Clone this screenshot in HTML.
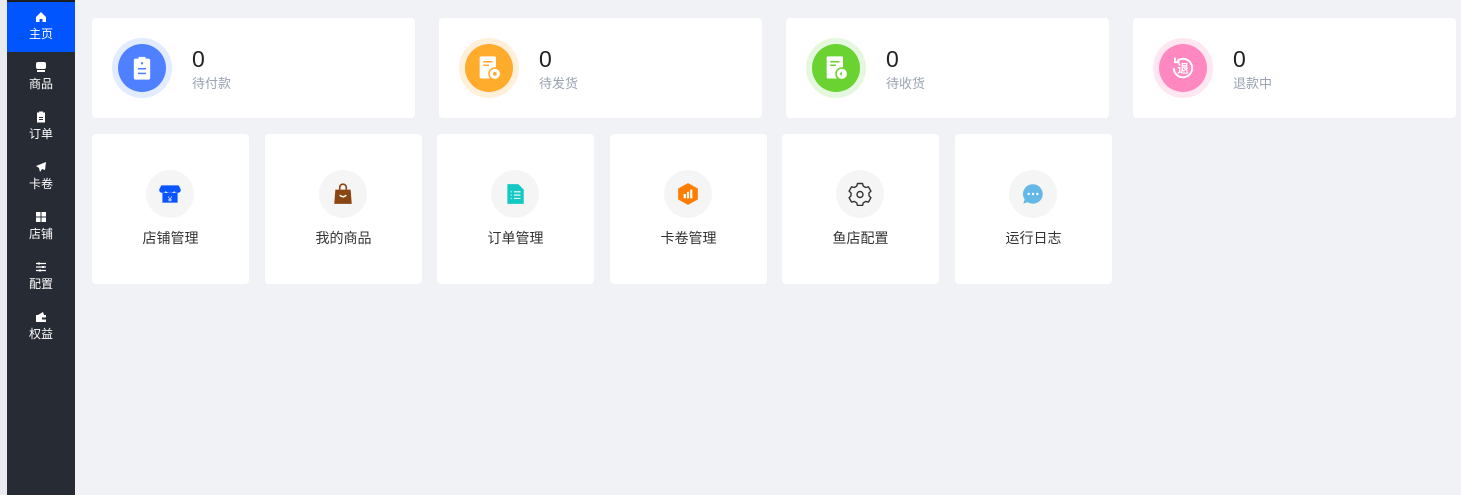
<!DOCTYPE html>
<html><head><meta charset="utf-8"><style>
*{margin:0;padding:0;box-sizing:border-box}
body{width:1461px;height:495px;background:#f0f2f5;font-family:"Liberation Sans","Noto Sans CJK SC",sans-serif;position:relative;overflow:hidden}
.strip{position:absolute;left:0;top:0;width:7px;height:495px;background:#e9ebee}
.side{position:absolute;left:7px;top:0;width:68px;height:495px;background:#272b34;border-top:2px solid #1b1e24}
.it{height:50px;color:#fff;text-align:center;font-size:12px;padding-top:9px}
.it.a{background:#0055ff}
.it svg{display:block;margin:0 auto 2px;width:12px;height:12px}
.card{position:absolute;top:18px;width:323px;height:100px;background:#fff;border-radius:4px}
.ring{position:absolute;left:20px;top:20px;width:60px;height:60px;border-radius:50%}
.in{position:absolute;left:6px;top:6px;width:48px;height:48px;border-radius:50%;display:flex;align-items:center;justify-content:center}
.num{position:absolute;left:100px;top:28px;font-size:23px;color:#222}
.lab{position:absolute;left:100px;top:55px;font-size:13px;color:#9aa3b2}
.tile{position:absolute;top:134px;width:157px;height:150px;background:#fff;border-radius:4px}
.ic{position:absolute;left:54px;top:36px;width:48px;height:48px;border-radius:50%;background:#f5f5f5;display:flex;align-items:center;justify-content:center}
.tl{position:absolute;left:0;right:0;top:94px;text-align:center;font-size:14px;color:#333}
</style></head><body>
<div class="strip"></div>
<div class="side">
<div class="it a"><svg viewBox="0 0 12 12"><path d="M6 1L1 6v5h3.5V8h3v3H11V6z" fill="#fff"/></svg>主页</div>
<div class="it"><svg viewBox="0 0 12 12"><rect x="1" y="1" width="10" height="7" rx="2" fill="#fff"/><rect x="2" y="9" width="8" height="2" fill="#fff"/></svg>商品</div>
<div class="it"><svg viewBox="0 0 12 12"><rect x="2" y="1.5" width="8" height="10" fill="#fff"/><rect x="4" y="0.5" width="4" height="2" fill="#fff"/><rect x="4" y="6" width="4" height="1" fill="#272b34"/><rect x="4" y="8" width="4" height="1" fill="#272b34"/></svg>订单</div>
<div class="it"><svg viewBox="0 0 12 12"><path d="M11 1L1 5l3 2 1 4 2-3 3 1z" fill="#fff"/></svg>卡卷</div>
<div class="it"><svg viewBox="0 0 12 12"><rect x="1" y="1" width="4.5" height="4.5" fill="#fff"/><rect x="6.5" y="1" width="4.5" height="4.5" fill="#fff"/><rect x="1" y="6.5" width="4.5" height="4.5" fill="#fff"/><rect x="6.5" y="6.5" width="4.5" height="4.5" fill="#fff"/></svg>店铺</div>
<div class="it"><svg viewBox="0 0 12 12"><path d="M1 2.5h10M1 6h10M1 9.5h10" stroke="#fff" stroke-width="1.2"/><rect x="3" y="1.5" width="2" height="2" fill="#fff"/><rect x="7" y="5" width="2" height="2" fill="#fff"/><rect x="4" y="8.5" width="2" height="2" fill="#fff"/></svg>配置</div>
<div class="it"><svg viewBox="0 0 12 12"><rect x="1" y="4" width="10" height="7" fill="#fff"/><path d="M3 4l5-3 1 3z" fill="#fff"/><rect x="7" y="6.5" width="4" height="2" fill="#272b34"/></svg>权益</div>
</div>

<div class="card" style="left:92px"><div class="ring" style="background:#e3ebff"><div class="in" style="background:#4f80ff"><svg width="28" height="28" viewBox="0 0 24 24"><rect x="5" y="4" width="14" height="18" rx="1.5" fill="#fff"/><rect x="9" y="2.5" width="6" height="3" fill="#fff"/><circle cx="12" cy="8" r="1" fill="#4f80ff"/><rect x="8.5" y="12" width="7" height="1.3" fill="#4f80ff"/><rect x="8.5" y="16" width="7" height="1.3" fill="#4f80ff"/></svg></div></div><div class="num">0</div><div class="lab">待付款</div></div>
<div class="card" style="left:439px"><div class="ring" style="background:#fff0dc"><div class="in" style="background:#ffab2c"><svg width="28" height="28" viewBox="0 0 24 24"><rect x="4" y="2" width="14" height="19" rx="1.5" fill="#fff"/><rect x="7" y="6" width="8" height="1.3" fill="#ffab2c"/><rect x="7" y="9" width="5" height="1.3" fill="#ffab2c"/><circle cx="17" cy="17" r="5" fill="#fff" stroke="#ffab2c" stroke-width="1.3"/><circle cx="17" cy="17" r="1.6" fill="#ffab2c"/></svg></div></div><div class="num">0</div><div class="lab">待发货</div></div>
<div class="card" style="left:786px"><div class="ring" style="background:#e6f7df"><div class="in" style="background:#6bd331"><svg width="28" height="28" viewBox="0 0 24 24"><rect x="4" y="2" width="14" height="19" rx="1" fill="#fff"/><rect x="7" y="6" width="8" height="1.3" fill="#6bd331"/><rect x="7" y="9" width="5" height="1.3" fill="#6bd331"/><circle cx="17" cy="17" r="5" fill="#fff" stroke="#6bd331" stroke-width="1.3"/><path d="M15 17l2-2v4z" fill="#6bd331"/></svg></div></div><div class="num">0</div><div class="lab">待收货</div></div>
<div class="card" style="left:1133px"><div class="ring" style="background:#ffe7f1"><div class="in" style="background:#ff88c0"><svg width="30" height="30" viewBox="0 0 26 26"><path d="M5 13a8 8 0 1 0 3-6.2" fill="none" stroke="#fff" stroke-width="1.6"/><path d="M6 4v4h4" fill="none" stroke="#fff" stroke-width="1.6"/><text x="13" y="17" font-size="10" fill="#fff" text-anchor="middle" font-family="Noto Sans CJK SC" font-weight="bold">退</text></svg></div></div><div class="num">0</div><div class="lab">退款中</div></div>

<div class="tile" style="left:92px"><div class="ic"><svg width="26" height="26" viewBox="0 0 24 24"><path d="M4 4h16l2 4q0 3-3 3t-3-2q-1 2-4 2t-4-2q0 2-3 2t-3-3z" fill="#0a55ff"/><rect x="5" y="11" width="14" height="9" fill="#0a55ff"/><text x="12" y="19" font-size="7" fill="#fff" text-anchor="middle">¥</text></svg></div><div class="tl">店铺管理</div></div>
<div class="tile" style="left:265px"><div class="ic"><svg width="24" height="24" viewBox="0 0 22 22"><path d="M8 7V5a3 3 0 0 1 6 0v2" fill="none" stroke="#8b4513" stroke-width="1.5"/><path d="M4 7h14l1 13H3z" fill="#8b4513"/><path d="M8 12q3 3 6 0" fill="none" stroke="#fff" stroke-width="1.3"/></svg></div><div class="tl">我的商品</div></div>
<div class="tile" style="left:437px"><div class="ic"><svg width="24" height="24" viewBox="0 0 22 22"><path d="M4 2h10l5 5v13H4z" fill="#14c8c4"/><path d="M7 9h1M10 9h6M7 12h1M10 12h6M7 15h1M10 15h6" stroke="#fff" stroke-width="1"/></svg></div><div class="tl">订单管理</div></div>
<div class="tile" style="left:610px"><div class="ic"><svg width="24" height="24" viewBox="0 0 22 22"><path d="M11 1l9 5v10l-9 5-9-5V6z" fill="#ff7d00"/><rect x="7" y="11" width="2" height="4" fill="#fff"/><rect x="10" y="9" width="2" height="6" fill="#fff"/><rect x="13" y="7" width="2" height="8" fill="#fff"/></svg></div><div class="tl">卡卷管理</div></div>
<div class="tile" style="left:782px"><div class="ic"><svg width="24" height="24" viewBox="0 0 24 24"><path d="M9.5 3h5l.8 2.6 2.5 1.4 2.6-.7 2.5 4.3-1.9 1.9v2.9l1.9 1.9-2.5 4.3-2.6-.7-2.5 1.4-.8 2.7h-5l-.8-2.7-2.5-1.4-2.6.7L1.1 17.3 3 15.4v-2.9L1.1 10.6 3.6 6.3l2.6.7 2.5-1.4z" transform="translate(0 -1.5)" fill="none" stroke="#333" stroke-width="1.4" stroke-linejoin="round"/><circle cx="12" cy="12.5" r="3" fill="none" stroke="#333" stroke-width="1.4"/></svg></div><div class="tl">鱼店配置</div></div>
<div class="tile" style="left:955px"><div class="ic"><svg width="26" height="26" viewBox="0 0 24 24"><path d="M12 3a9 9 0 1 1-5 16.5L3 21l1.3-4A9 9 0 0 1 12 3z" fill="#64b8e6"/><circle cx="8" cy="12" r="1.1" fill="#fff"/><circle cx="12" cy="12" r="1.1" fill="#fff"/><circle cx="16" cy="12" r="1.1" fill="#fff"/></svg></div><div class="tl">运行日志</div></div>
</body></html>
